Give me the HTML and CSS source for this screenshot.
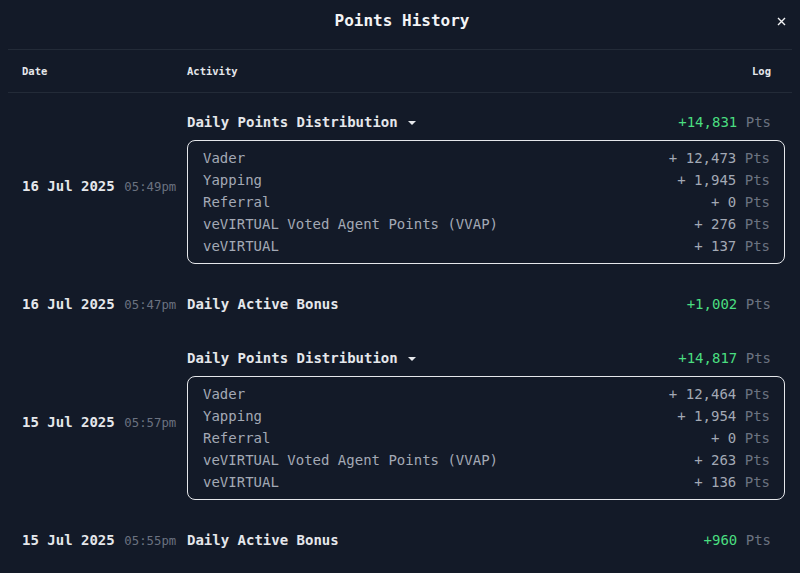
FILE: index.html
```html
<!DOCTYPE html>
<html lang="en">

<head>
    <meta charset="UTF-8">
    <meta name="viewport" content="width=device-width, initial-scale=1.0">
    <title>Points History</title>
    <link rel="stylesheet" href="styles.css">
</head>

<body>

    <div class="modal">
        <div class="modal-head">
            <h1 class="modal-title">Points History</h1>
            <svg class="close" width="9" height="9" viewBox="0 0 9 9">
                <path d="M1 1L8 8M8 1L1 8" stroke="#f3f4f6" stroke-width="1.4" />
            </svg>
        </div>

        <div class="table-head">
            <div class="col-date">Date</div>
            <div class="col-activity">Activity</div>
            <div class="col-log">Log</div>
        </div>

        <div class="row">
            <div class="col-date"><span class="day">16 Jul 2025</span> <span class="time">05:49pm</span></div>
            <div class="col-main">
                <div class="line">
                    <span class="activity">Daily Points Distribution <span class="caret"></span></span>
                    <span class="amount">+14,831 <span class="pts">Pts</span></span>
                </div>
                <div class="breakdown">
                    <div class="sub"><span>Vader</span><span>+ 12,473 <span class="pts">Pts</span></span></div>
                    <div class="sub"><span>Yapping</span><span>+ 1,945 <span class="pts">Pts</span></span></div>
                    <div class="sub"><span>Referral</span><span>+ 0 <span class="pts">Pts</span></span></div>
                    <div class="sub"><span>veVIRTUAL Voted Agent Points (VVAP)</span><span>+ 276 <span class="pts">Pts</span></span></div>
                    <div class="sub"><span>veVIRTUAL</span><span>+ 137 <span class="pts">Pts</span></span></div>
                </div>
            </div>
        </div>

        <div class="row">
            <div class="col-date"><span class="day">16 Jul 2025</span> <span class="time">05:47pm</span></div>
            <div class="col-main">
                <div class="line">
                    <span class="activity">Daily Active Bonus</span>
                    <span class="amount">+1,002 <span class="pts">Pts</span></span>
                </div>
            </div>
        </div>

        <div class="row">
            <div class="col-date"><span class="day">15 Jul 2025</span> <span class="time">05:57pm</span></div>
            <div class="col-main">
                <div class="line">
                    <span class="activity">Daily Points Distribution <span class="caret"></span></span>
                    <span class="amount">+14,817 <span class="pts">Pts</span></span>
                </div>
                <div class="breakdown">
                    <div class="sub"><span>Vader</span><span>+ 12,464 <span class="pts">Pts</span></span></div>
                    <div class="sub"><span>Yapping</span><span>+ 1,954 <span class="pts">Pts</span></span></div>
                    <div class="sub"><span>Referral</span><span>+ 0 <span class="pts">Pts</span></span></div>
                    <div class="sub"><span>veVIRTUAL Voted Agent Points (VVAP)</span><span>+ 263 <span class="pts">Pts</span></span></div>
                    <div class="sub"><span>veVIRTUAL</span><span>+ 136 <span class="pts">Pts</span></span></div>
                </div>
            </div>
        </div>

        <div class="row">
            <div class="col-date"><span class="day">15 Jul 2025</span> <span class="time">05:55pm</span></div>
            <div class="col-main">
                <div class="line">
                    <span class="activity">Daily Active Bonus</span>
                    <span class="amount">+960 <span class="pts">Pts</span></span>
                </div>
            </div>
        </div>
    </div>

</body>

</html>
```

FILE: styles.css
```css
body,
html {
    margin: 0;
    height: 100%;
    background-color: #131a28;
    color: #e5e7eb;
    font-family: 'DejaVu Sans Mono', 'Liberation Mono', monospace;
    overflow: hidden;
}

.modal {
    padding: 0 8px;
}

.modal-head {
    height: 49px;
    display: flex;
    justify-content: center;
    align-items: flex-start;
    position: relative;
    border-bottom: 1px solid #232b38;
}

.modal-title {
    margin: 11px 0 0;
    font-size: 16px;
    line-height: 20px;
    font-weight: bold;
    color: #f3f4f6;
    padding-left: 4px;
}

.close {
    position: absolute;
    right: 6px;
    top: 17px;
}

.table-head {
    display: flex;
    align-items: center;
    height: 42px;
    padding: 0 21px 0 14px;
    border-bottom: 1px solid #232b38;
    font-size: 10.5px;
    font-weight: bold;
}

.table-head .col-activity {
    flex: 1;
}

.col-date {
    width: 165px;
    flex-shrink: 0;
    white-space: nowrap;
}

.row {
    display: flex;
    align-items: center;
    padding: 14px 7px 10.5px 14px;
}

.day {
    font-size: 14px;
    font-weight: bold;
    color: #e5e7eb;
}

.time {
    font-size: 12.3px;
    color: #6b7280;
}

.col-main {
    flex: 1;
}

.line {
    height: 30px;
    display: flex;
    justify-content: space-between;
    align-items: center;
    padding-right: 14px;
    font-size: 14px;
}

.activity {
    font-weight: bold;
    color: #e5e7eb;
}

.caret {
    display: inline-block;
    width: 0;
    height: 0;
    margin-left: 2px;
    vertical-align: middle;
    border-left: 4px solid transparent;
    border-right: 4px solid transparent;
    border-top: 4px solid #e5e7eb;
}

.amount {
    color: #4ade80;
}

.pts {
    color: #6b7280;
    font-weight: normal;
}

.breakdown {
    margin-top: 3px;
    border: 1px solid #e5e7eb;
    border-radius: 8px;
    padding: 6px 14px 6px 15px;
}

.sub {
    display: flex;
    justify-content: space-between;
    line-height: 22px;
    font-size: 14px;
    color: #a3a9b5;
}
```
